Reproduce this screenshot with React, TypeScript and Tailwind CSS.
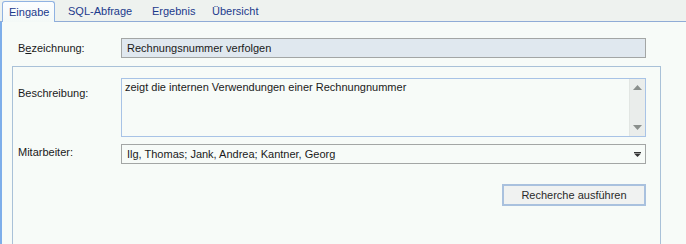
import React from 'react';

// inactive tabs get fixed widths so their captions land where the reference has them
const TABS: { label: string; width: string }[] = [
  { label: 'SQL-Abfrage', width: 'w-[84px]' },
  { label: 'Ergebnis', width: 'w-[60px]' },
  { label: 'Übersicht', width: 'w-[70px]' },
];

const ScrollArrow: React.FC<{ up?: boolean }> = ({ up }) => (
  <svg width="9" height="5" viewBox="0 0 9 5" className="block">
    {up ? <path d="M0 5 L4.5 0 L9 5 Z" fill="#8a8f8c" /> : <path d="M0 0 L9 0 L4.5 5 Z" fill="#8a8f8c" />}
  </svg>
);

const App: React.FC = () => {
  return (
    <div
      className="w-[686px] h-[244px] flex flex-col bg-[#eef2ef] text-[11px] text-[#1a1a1a] overflow-hidden"
      style={{ fontFamily: '"Liberation Sans", Arial, sans-serif' }}
    >
      {/* Tab strip */}
      <div className="h-[22px] flex items-end pl-[2px] border-b border-[#90acd6] shrink-0">
        <div className="w-[53px] h-[21px] -mb-px pl-[6px] flex items-center rounded-t-[3px] border border-b-0 border-[#8fb2e2] bg-gradient-to-b from-[#fbfdff] to-[#f4f9f7] text-[#1c3a8c]">
          Eingabe
        </div>
        <div className="w-[3px]" />
        {TABS.map(tab => (
          <div key={tab.label} className={`${tab.width} h-[20px] pl-[10px] flex items-center text-[#1c3a8c]`}>
            {tab.label}
          </div>
        ))}
      </div>

      {/* Page body */}
      <div className="flex-1 bg-[#f7fbf8] border-l-2 border-[#7eaeea] pt-[16px] pl-[16px]">
        <div className="flex items-center">
          <span className="w-[103px] shrink-0">
            B<span className="underline">e</span>zeichnung:
          </span>
          <div className="w-[525px] h-[20px] border border-[#a3a6a5] bg-[#e0e8ef] flex items-center px-[5px]">
            Rechnungsnummer verfolgen
          </div>
        </div>

        {/* Group box */}
        <div className="mt-[8px] -ml-[6px] w-[649px] h-[200px] border border-b-0 border-[#a9c1d8] pt-[11px] pl-[5px]">
          <div className="flex items-start">
            <span className="w-[103px] shrink-0 pt-[7px]">Beschreibung:</span>
            <div className="w-[525px] h-[59px] border border-[#a8c3e6] bg-[#f7fbf8] flex">
              <div className="flex-1 px-[3px] pt-[1px] leading-[15px]">
                zeigt die internen Verwendungen einer Rechnungnummer
              </div>
              <div className="w-[16px] bg-[#eaedeb] border-l border-[#e2e6e3] flex flex-col items-center justify-between py-[6px]">
                <ScrollArrow up />
                <ScrollArrow />
              </div>
            </div>
          </div>

          <div className="flex items-center mt-[7px]">
            <span className="w-[103px] shrink-0 -mt-[3px]">Mitarbeiter:</span>
            <div className="w-[525px] h-[20px] border border-[#a3a6a5] bg-[#f7fbf8] flex items-center pl-[5px] pr-[4px]">
              <span className="flex-1">Ilg, Thomas; Jank, Andrea; Kantner, Georg</span>
              <svg width="7" height="5" viewBox="0 0 7 5" className="block">
                <rect x="0" y="0" width="7" height="1" fill="#333" />
                <path d="M0 1.5 L7 1.5 L3.5 5 Z" fill="#333" />
              </svg>
            </div>
          </div>

          <div className="w-[628px] flex justify-end mt-[20px]">
            <button className="w-[144px] h-[22px] border-2 border-[#a9c1de] bg-[#f0f2f1] text-[#2a2a2a] flex items-center justify-center">
              Recherche ausführen
            </button>
          </div>
        </div>
      </div>
    </div>
  );
};

export default App;
